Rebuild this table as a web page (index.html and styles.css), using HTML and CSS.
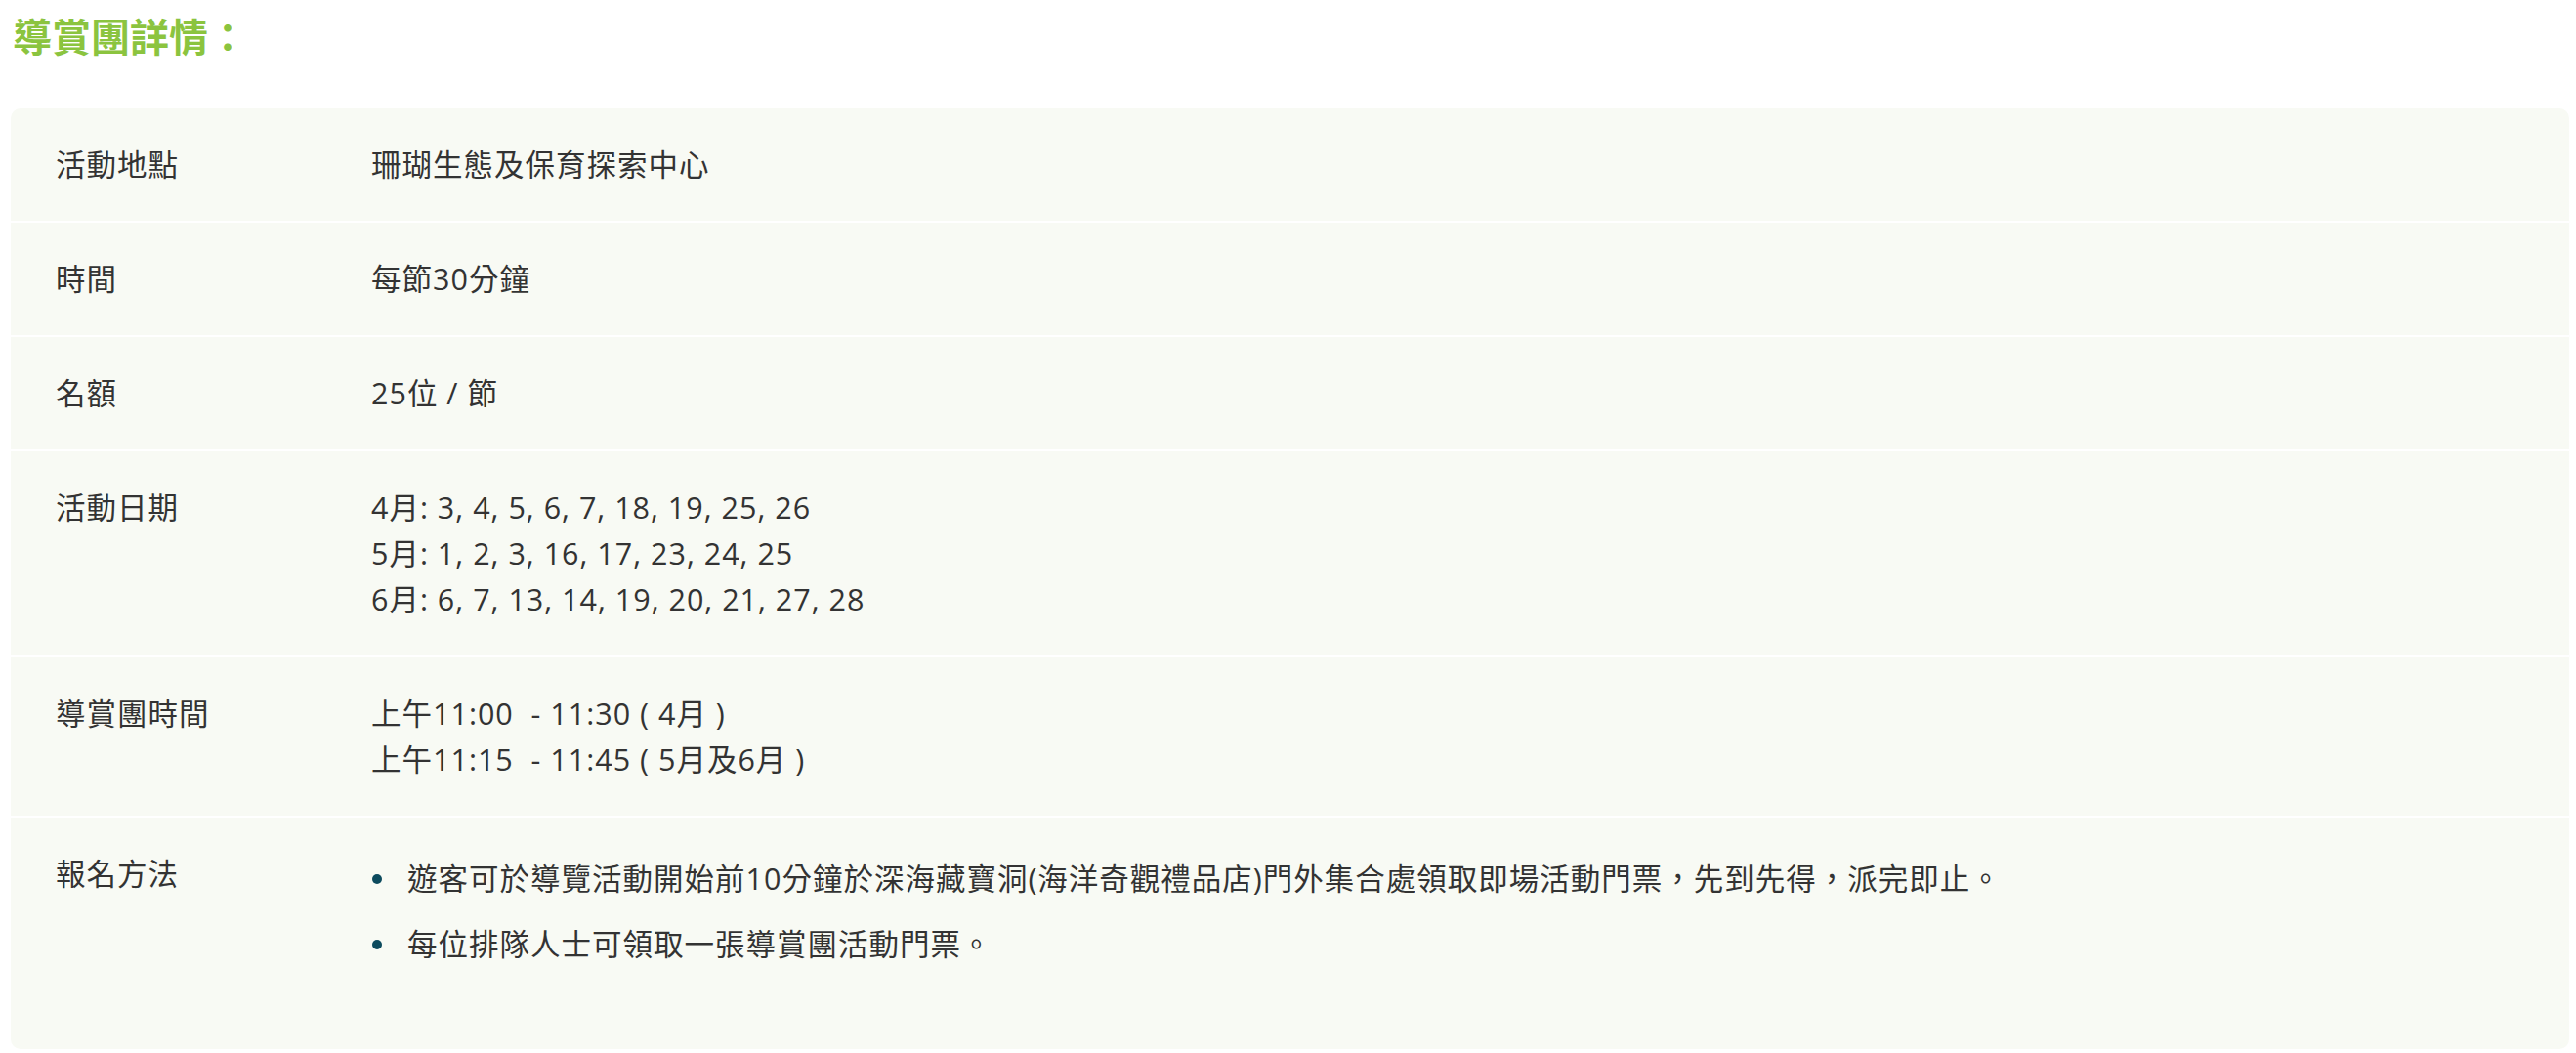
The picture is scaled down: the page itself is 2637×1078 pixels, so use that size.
FILE: index.html
```html
<!DOCTYPE html>
<html lang="zh-Hant">
<head>
<meta charset="utf-8">
<title>導賞團詳情</title>
<link rel="stylesheet" href="styles.css">
</head>
<body>
<div class="page">
  <h2 class="title">導賞團詳情：</h2>
  <div class="details">
    <div class="row">
      <div class="label">活動地點</div>
      <div class="value">珊瑚生態及保育探索中心</div>
    </div>
    <div class="row">
      <div class="label">時間</div>
      <div class="value">每節30分鐘</div>
    </div>
    <div class="row">
      <div class="label">名額</div>
      <div class="value">25位 / 節</div>
    </div>
    <div class="row">
      <div class="label">活動日期</div>
      <div class="value">4月: 3, 4, 5, 6, 7, 18, 19, 25, 26<br>5月: 1, 2, 3, 16, 17, 23, 24, 25<br>6月: 6, 7, 13, 14, 19, 20, 21, 27, 28</div>
    </div>
    <div class="row">
      <div class="label">導賞團時間</div>
      <div class="value">上午11:00&nbsp; - 11:30 ( 4月 )<br>上午11:15&nbsp; - 11:45 ( 5月及6月 )</div>
    </div>
    <div class="row">
      <div class="label">報名方法</div>
      <div class="value">
        <ul class="bullets">
          <li>遊客可於導覽活動開始前10分鐘於深海藏寶洞(海洋奇觀禮品店)門外集合處領取即場活動門票，先到先得，派完即止。</li>
          <li>每位排隊人士可領取一張導賞團活動門票。</li>
        </ul>
      </div>
    </div>
  </div>
</div>
</body>
</html>
```

FILE: styles.css
```css
html, body {
  margin: 0;
  padding: 0;
  background: #ffffff;
}

body {
  font-family: "Open Sans", "Noto Sans CJK TC", sans-serif;
  color: #333333;
}

.page {
  display: flex;
  flex-direction: column;
}

.title {
  margin: 0;
  height: 111px;
  box-sizing: border-box;
  padding: 12px 0 0 13px;
  font-family: "Noto Sans CJK TC", sans-serif;
  font-size: 40px;
  line-height: 48px;
  font-weight: 700;
  color: #8bc43f;
}

.details {
  margin: 0 7px 0 11px;
  border-radius: 10px;
  overflow: hidden;
  display: flex;
  flex-direction: column;
  gap: 2px;
  background: #ffffff;
}

.row {
  display: grid;
  grid-template-columns: 369px 1fr;
  background: #f8faf4;
  padding: 34px 0;
  font-size: 30.5px;
  line-height: 47px;
  letter-spacing: 1px;
}

.label {
  padding-left: 46px;
}

.bullets {
  list-style: none;
  margin: 5px 0 50px;
  padding-left: 37px;
}

.bullets li {
  display: flex;
  margin-bottom: 20px;
}

.bullets li::before {
  content: "";
  flex: none;
  width: 10px;
  height: 10px;
  border-radius: 50%;
  background: #0d4b5e;
  margin: 19px 26px 0 -36px;
}
```
